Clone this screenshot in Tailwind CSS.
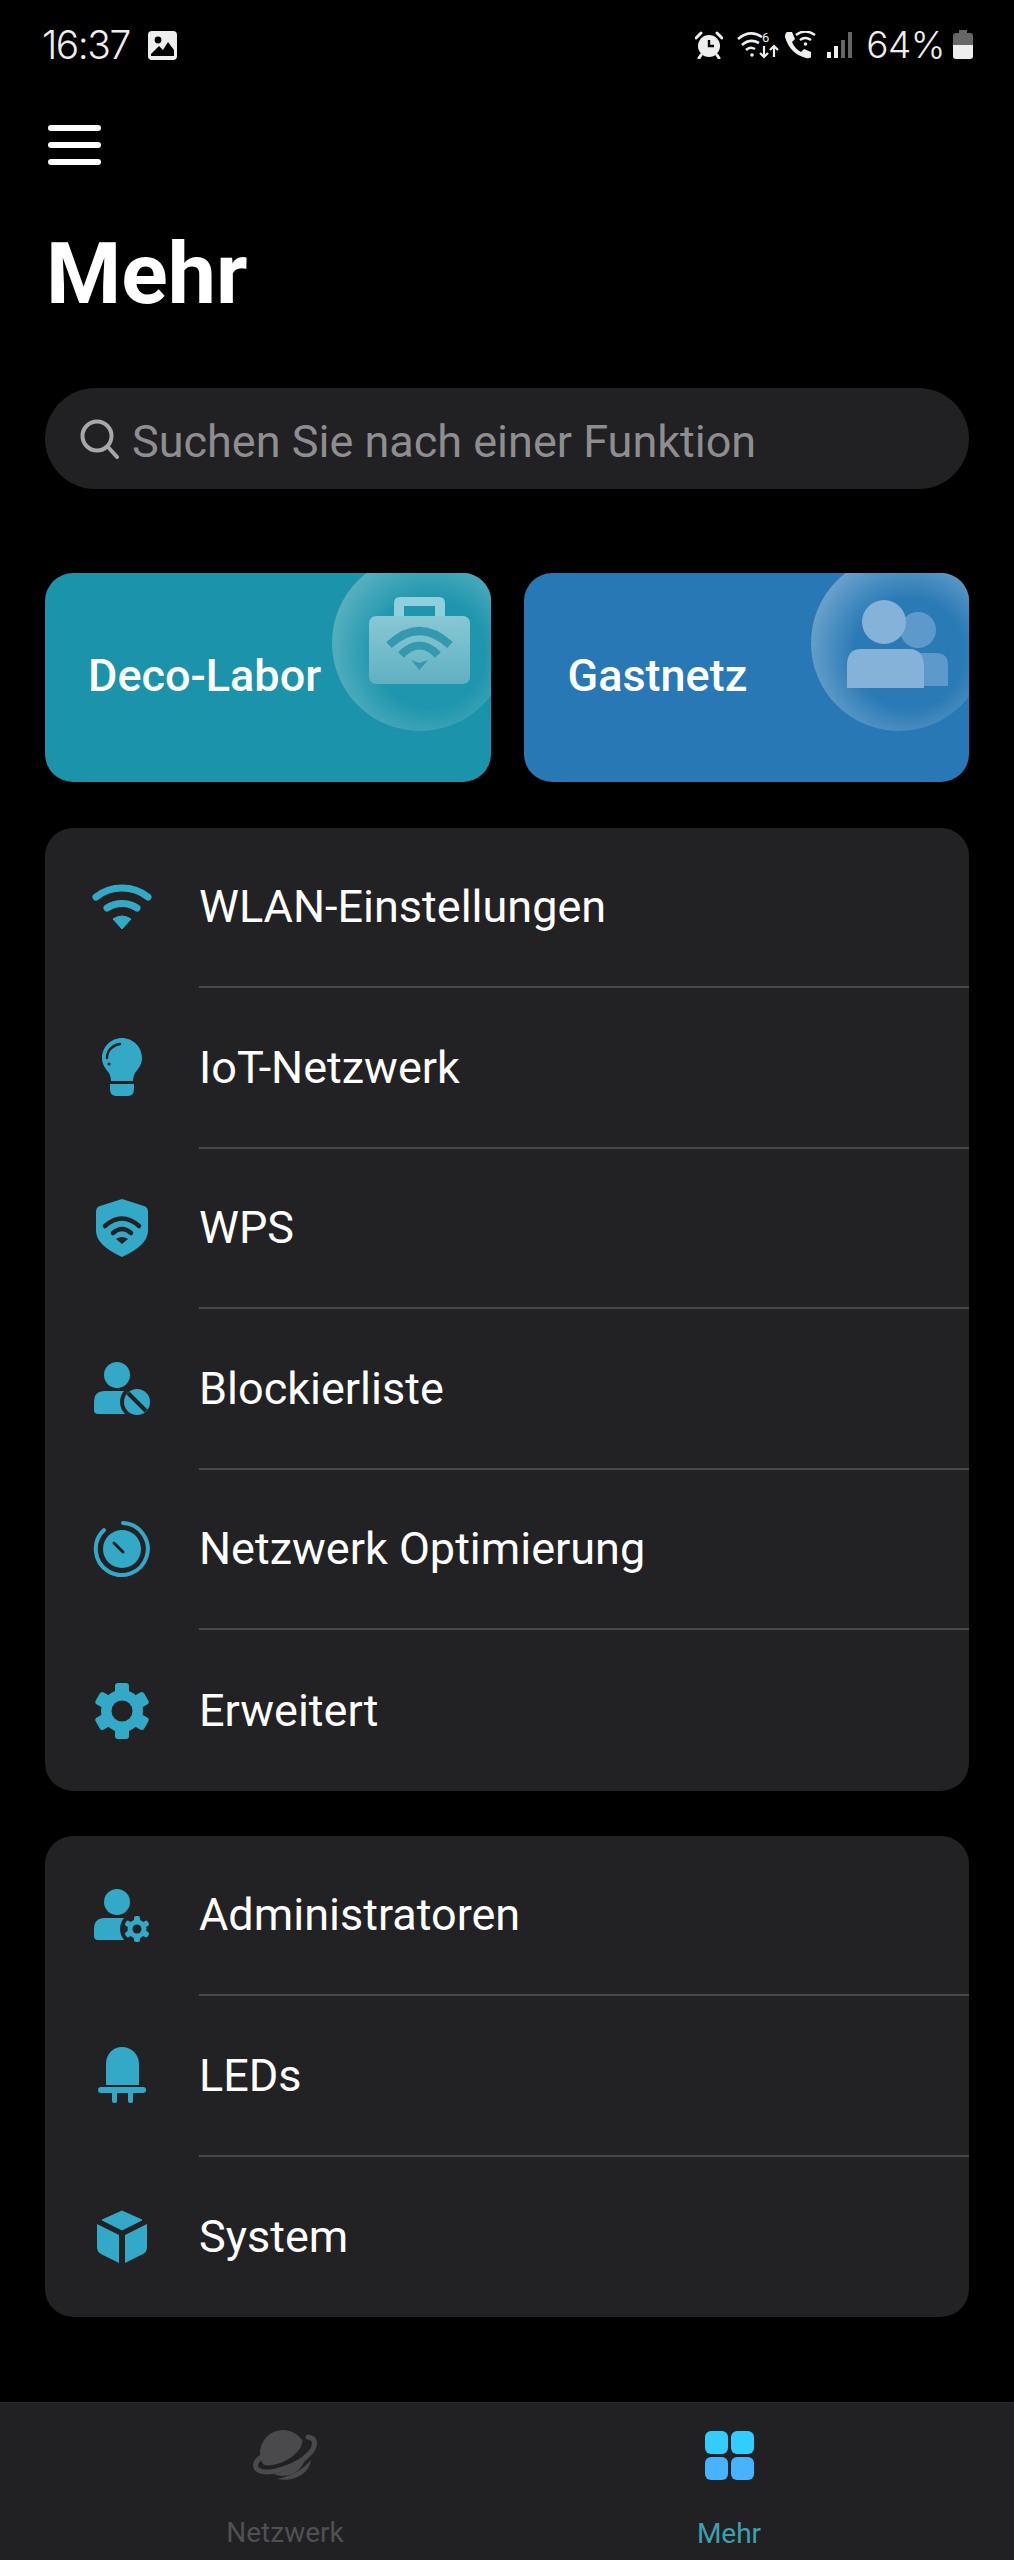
<!DOCTYPE html>
<html lang="de">
    <head>
        <meta charset="UTF-8" />
        <meta name="viewport" content="width=device-width, initial-scale=1.0" />
        <script src="https://cdn.jsdelivr.net/npm/@tailwindcss/browser@4"></script>
        <title>Mehr</title>
    </head>
    <body class="bg-black text-white font-['Roboto',sans-serif]">
        <div class="w-[1014px] h-[2560px] flex flex-col overflow-hidden">
            <!-- Status bar -->
            <div class="h-[60px] pt-[30px] pl-[42px] pr-[41px] flex justify-between items-center text-[#eeeeee]">
                <div class="flex items-center gap-[18px]">
                    <span class="text-[39px] leading-[40px] font-['Inter',sans-serif] tracking-[-1.5px] font-light">16:37</span>
                    <svg class="w-[29px] h-[29px]" viewBox="0 0 29 29">
                        <rect width="29" height="29" rx="4" fill="currentColor" />
                        <circle cx="10" cy="9" r="3.4" fill="#000" />
                        <path d="M3 23 L11 15 L15 19 L20 11 L26 19 V25 H3 Z" fill="#000" />
                    </svg>
                </div>
                <div class="flex items-center">
                    <svg class="w-[28px] h-[28px]" viewBox="0 0 28 28" fill="currentColor">
                        <circle cx="14" cy="15" r="11" />
                        <path d="M14 9 V15 H19" stroke="#000" stroke-width="2.4" fill="none" />
                        <path d="M1 7 L6 2 M27 7 L22 2 M6 24 L4 27 M22 24 L24 27" stroke="currentColor" stroke-width="3" stroke-linecap="round" />
                    </svg>
                    <svg class="w-[42px] h-[28px] ml-[14px]" viewBox="0 0 42 28" fill="none" stroke="currentColor">
                        <path d="M1 8 Q13 -2 25 6" stroke-width="2.6" />
                        <path d="M5 14 Q13 7 22 12" stroke-width="2.6" />
                        <path d="M9 19 Q13 15 18 18" stroke-width="2.6" />
                        <circle cx="15" cy="24" r="1.8" fill="currentColor" stroke="none" />
                        <path d="M27 15 V26 M23 22 L27 26 L31 22 M37 26 V15 M33 19 L37 15 L41 19" stroke-width="2.2" />
                        <text x="25" y="11" font-size="13" fill="currentColor" stroke="none" font-family="Roboto">6</text>
                    </svg>
                    <svg class="w-[32px] h-[28px] ml-[5px]" viewBox="0 0 32 28" fill="currentColor">
                        <path d="M3 1 L8 1 L11 8 L8 11 Q11 18 17 21 L20 18 L27 21 V26 Q26 28 22 27 Q6 23 1 6 Q1 2 3 1 Z" />
                        <g fill="none" stroke="currentColor" stroke-width="2.4">
                            <path d="M12 4 Q21 -3 31 4" />
                            <path d="M16 9 Q21 5 27 9" />
                        </g>
                        <circle cx="21.500" cy="13" r="1.8" />
                    </svg>
                    <svg class="w-[26px] h-[28px] ml-[10px]" viewBox="0 0 26 28">
                        <rect x="1" y="21" width="4" height="6" fill="#eeeeee" />
                        <rect x="8" y="15" width="4" height="12" fill="#eeeeee" />
                        <rect x="15" y="9" width="4" height="18" fill="#666666" />
                        <rect x="22" y="1" width="4" height="26" fill="#666666" />
                    </svg>
                    <span class="text-[37px] leading-[40px] font-['Inter',sans-serif] font-light tracking-[-0.5px] ml-[14px]">64%</span>
                    <svg class="w-[20px] h-[30px] ml-[8px]" viewBox="0 0 20 30">
                        <path d="M6 0 H14 V3 H17 Q20 3 20 6 V15 H0 V6 Q0 3 3 3 H6 Z" fill="#666666" />
                        <path d="M0 15 H20 V26 Q20 29 17 29 H3 Q0 29 0 26 Z" fill="#eeeeee" />
                    </svg>
                </div>
            </div>

            <!-- Menu button -->
            <div class="ml-[48px] mt-[65px] flex flex-col gap-[11px] w-[53px]">
                <div class="h-[6px] rounded-full bg-white"></div>
                <div class="h-[6px] rounded-full bg-white"></div>
                <div class="h-[6px] rounded-full bg-white"></div>
            </div>

            <h1 class="ml-[46px] mt-[59px] text-[86px] leading-[100px] font-bold">Mehr</h1>

            <!-- Search -->
            <div class="mx-[45px] mt-[64px] h-[101px] rounded-full bg-[#212123] flex items-center pl-[35px] gap-[12px] text-[#8e8e90]">
                <svg class="w-[40px] h-[40px]" viewBox="0 0 40 40" fill="none" stroke="#a8a8aa" stroke-width="4" stroke-linecap="round">
                    <circle cx="17" cy="17" r="14.500" />
                    <path d="M28 28 L37 38" />
                </svg>
                <span class="text-[45px] leading-none mt-[6px]">Suchen Sie nach einer Funktion</span>
            </div>

            <!-- Feature cards -->
            <div class="mx-[45px] mt-[84px] grid grid-cols-2 gap-[33px]">
                <div class="relative h-[209px] rounded-[28px] bg-[#1b93ab] overflow-hidden flex items-center pl-[43px] pb-[4px]">
                    <span class="text-[45px] font-medium">Deco-Labor</span>
                    <svg class="absolute left-[287px] top-[-18px] w-[176px] h-[176px]" viewBox="0 0 176 176">
                        <defs>
                            <radialGradient id="haloTeal" cx="0.56" cy="0.56" r="0.62">
                                <stop offset="50%" stop-color="#1f96ad" />
                                <stop offset="100%" stop-color="#5fb3c2" />
                            </radialGradient>
                            <linearGradient id="caseFill" x1="0" y1="0" x2="0" y2="1">
                                <stop offset="0%" stop-color="#88c8d4" />
                                <stop offset="100%" stop-color="#60b0c2" />
                            </linearGradient>
                        </defs>
                        <circle cx="88" cy="88" r="88" fill="url(#haloTeal)" />
                        <path d="M68 42 H107 Q113 42 113 48 V62 H103 V51 H72 V62 H62 V48 Q62 42 68 42 Z" fill="#8fd0dc" />
                        <rect x="37" y="61" width="101" height="68" rx="7" fill="url(#caseFill)" />
                        <g fill="none" stroke="#3499ae" stroke-width="8">
                            <path d="M57 90 Q87.500 62 118 90" />
                            <path d="M69 100 Q87.500 81 106 100" />
                        </g>
                        <path d="M79 105 L87.500 108 L96 105 L87.500 115 Z" fill="#3499ae" />
                    </svg>
                </div>
                <div class="relative h-[209px] rounded-[28px] bg-[#2778b4] overflow-hidden flex items-center pl-[44px] pb-[4px]">
                    <span class="text-[45px] font-medium">Gastnetz</span>
                    <svg class="absolute left-[287px] top-[-18px] w-[176px] h-[176px]" viewBox="0 0 176 176">
                        <defs>
                            <radialGradient id="haloBlue" cx="0.56" cy="0.56" r="0.62">
                                <stop offset="50%" stop-color="#2a7ab5" />
                                <stop offset="100%" stop-color="#72a6cf" />
                            </radialGradient>
                        </defs>
                        <circle cx="88" cy="88" r="88" fill="url(#haloBlue)" />
                        <circle cx="107" cy="75" r="18" fill="#5d9acb" />
                        <path d="M100 98 H125 Q137 98 137 110 V131 H100 Z" fill="#5d9acb" />
                        <circle cx="73" cy="67" r="22" fill="#85b2d9" />
                        <path d="M50 94 H98 Q113 94 113 112 V133 H36 V110 Q36 94 50 94 Z" fill="#85b2d9" />
                    </svg>
                </div>
            </div>

            <!-- Settings group -->
            <div class="mx-[45px] mt-[46px] h-[963px] rounded-[28px] bg-[#222224] flex flex-col">
                <div class="h-[158px] flex items-center">
                    <svg class="w-[60px] h-[60px] ml-[47px]" viewBox="0 0 60 60" fill="#33a9c7">
                        <g fill="none" stroke="#33a9c7" stroke-width="7" stroke-linecap="round">
                            <path d="M4 20 C19 8 41 8 56 20" />
                            <path d="M15 31 C24 25 36 25 45 31" />
                        </g>
                        <path d="M21 42 Q30 36 39 42 L30 52 Z" stroke="#33a9c7" stroke-width="1" />
                    </svg>
                    <span class="ml-[47px] text-[45px]">WLAN-Einstellungen</span>
                </div>
                <div class="h-[2px] ml-[154px] bg-[#48484a]"></div>
                <div class="h-[158.500px] flex items-center">
                    <svg class="w-[60px] h-[60px] ml-[47px]" viewBox="0 0 60 60" fill="#33a9c7">
                        <path d="M30 1 C41 1 50 10 50 21 C50 28 46 32 43 36 C42 38 41 41 41 44 H19 C19 41 18 38 17 36 C14 32 10 28 10 21 C10 10 19 1 30 1 Z" />
                        <path d="M18 47 H42 V52 Q42 59 36 59 H24 Q18 59 18 52 Z" />
                        <path d="M15 21 C15 13 21 8 28 7" fill="none" stroke="#222224" stroke-width="2.4" stroke-linecap="round" />
                        <circle cx="17" cy="27" r="1.600" fill="#222224" />
                    </svg>
                    <span class="ml-[47px] text-[45px]">IoT-Netzwerk</span>
                </div>
                <div class="h-[2px] ml-[154px] bg-[#48484a]"></div>
                <div class="h-[158.500px] flex items-center">
                    <svg class="w-[60px] h-[60px] ml-[47px]" viewBox="0 0 60 60" fill="#33a9c7">
                        <path d="M30 1 L52 8 Q56 9 56 14 V33 Q56 47 30 59 Q4 47 4 33 V14 Q4 9 8 8 Z" />
                        <g fill="none" stroke="#222224" stroke-width="4.500" stroke-linecap="round">
                            <path d="M13 28 Q30 13 47 28" />
                            <path d="M21 35 Q30 27 39 35" />
                        </g>
                        <path d="M24 41 Q30 37 36 41 L30 46 Z" fill="#222224" />
                    </svg>
                    <span class="ml-[47px] text-[45px]">WPS</span>
                </div>
                <div class="h-[2px] ml-[154px] bg-[#48484a]"></div>
                <div class="h-[158.500px] flex items-center">
                    <svg class="w-[60px] h-[60px] ml-[47px]" viewBox="0 0 60 60" fill="#33a9c7">
                        <circle cx="25" cy="17" r="13" />
                        <path d="M13 33 H37 Q47 33 47 45 V56 H6 Q2 56 2 52 V44 Q2 33 13 33 Z" />
                        <circle cx="45" cy="44" r="17" fill="#222224" />
                        <circle cx="45" cy="44" r="13" />
                        <path d="M36 35 L54 53" stroke="#222224" stroke-width="4" />
                    </svg>
                    <span class="ml-[47px] text-[45px]">Blockierliste</span>
                </div>
                <div class="h-[2px] ml-[154px] bg-[#48484a]"></div>
                <div class="h-[158.500px] flex items-center">
                    <svg class="w-[60px] h-[60px] ml-[47px]" viewBox="0 0 60 60" fill="#33a9c7">
                        <path d="M31 4 A26 26 0 1 1 12 11" fill="none" stroke="#33a9c7" stroke-width="4" stroke-linecap="round" />
                        <circle cx="30" cy="30" r="19" />
                        <path d="M22 24 L31 33" stroke="#222224" stroke-width="3" stroke-linecap="round" />
                    </svg>
                    <span class="ml-[47px] text-[45px]">Netzwerk Optimierung</span>
                </div>
                <div class="h-[2px] ml-[154px] bg-[#48484a]"></div>
                <div class="flex-1 flex items-center">
                    <svg class="w-[60px] h-[60px] ml-[47px]" viewBox="0 0 60 60" fill="#33a9c7">
                        <circle cx="30" cy="30" r="21" />
                        <rect x="23" y="2" width="14" height="14" rx="3" />
                        <rect x="23" y="44" width="14" height="14" rx="3" />
                        <rect x="23" y="2" width="14" height="14" rx="3" transform="rotate(60 30 30)" />
                        <rect x="23" y="2" width="14" height="14" rx="3" transform="rotate(120 30 30)" />
                        <rect x="23" y="2" width="14" height="14" rx="3" transform="rotate(240 30 30)" />
                        <rect x="23" y="2" width="14" height="14" rx="3" transform="rotate(300 30 30)" />
                        <circle cx="30" cy="30" r="10.500" fill="#222224" />
                    </svg>
                    <span class="ml-[47px] text-[45px]">Erweitert</span>
                </div>
            </div>

            <!-- System group -->
            <div class="mx-[45px] mt-[45px] h-[481px] rounded-[28px] bg-[#222224] flex flex-col">
                <div class="h-[158px] flex items-center">
                    <svg class="w-[60px] h-[60px] ml-[47px]" viewBox="0 0 60 60" fill="#33a9c7">
                        <circle cx="25" cy="17" r="13" />
                        <path d="M13 33 H37 Q47 33 47 45 V55 H6 Q2 55 2 51 V44 Q2 33 13 33 Z" />
                        <circle cx="45" cy="44" r="17" fill="#222224" />
                        <circle cx="45" cy="44" r="9.500" />
                        <rect x="42" y="31" width="6" height="26" rx="2" />
                        <rect x="42" y="31" width="6" height="26" rx="2" transform="rotate(60 45 44)" />
                        <rect x="42" y="31" width="6" height="26" rx="2" transform="rotate(120 45 44)" />
                        <circle cx="45" cy="44" r="4.500" fill="#222224" />
                    </svg>
                    <span class="ml-[47px] text-[45px]">Administratoren</span>
                </div>
                <div class="h-[2px] ml-[154px] bg-[#48484a]"></div>
                <div class="h-[158.500px] flex items-center">
                    <svg class="w-[60px] h-[60px] ml-[47px]" viewBox="0 0 60 60" fill="#33a9c7">
                        <path d="M14 40 V19 C14 9 21 2 30 2 C39 2 47 9 47 19 V40 Z" />
                        <rect x="6" y="42" width="48" height="6" rx="3" />
                        <rect x="20" y="46" width="5" height="12" rx="2" />
                        <rect x="36" y="46" width="5" height="12" rx="2" />
                    </svg>
                    <span class="ml-[47px] text-[45px]">LEDs</span>
                </div>
                <div class="h-[2px] ml-[154px] bg-[#48484a]"></div>
                <div class="flex-1 flex items-center">
                    <svg class="w-[60px] h-[60px] ml-[47px]" viewBox="0 0 60 60" fill="#33a9c7">
                        <path d="M30 4 L50 13 L30 23 L10 13 Z" stroke="#33a9c7" stroke-width="1" stroke-linejoin="round" />
                        <path d="M5 17 L27 28 V56 L9 47 Q5 45 5 40 Z" />
                        <path d="M55 17 L33 28 V56 L51 47 Q55 45 55 40 Z" />
                    </svg>
                    <span class="ml-[47px] text-[45px]">System</span>
                </div>
            </div>

            <!-- Tab bar -->
            <div class="mt-auto h-[158px] bg-[#212123] border-t border-[#2a2a2c] px-[63px] grid grid-cols-2">
                <div class="flex flex-col items-center pt-[27px] text-[#505052]">
                    <svg class="w-[64px] h-[52px]" viewBox="0 0 64 52">
                        <circle cx="30" cy="23" r="23" fill="#4a4a4c" />
                        <path d="M52 10 C56 15 50 24 42 30 C30 39 12 43 6 37" fill="none" stroke="#212123" stroke-width="9" />
                        <path d="M55 7 C64 8 63 17 56 24 C44 37 14 46 5 40 C1 37 2 32 7 28" fill="none" stroke="#4a4a4c" stroke-width="5" stroke-linecap="round" />
                        <path d="M24 49 C36 47 50 40 58 30 C57 41 44 53 24 49 Z" fill="#4a4a4c" />
                    </svg>
                    <span class="mt-[33px] text-[28px] leading-[36px]">Netzwerk</span>
                </div>
                <div class="flex flex-col items-center pt-[28px] text-[#3f9fb0]">
                    <div class="w-[49px] h-[49px] grid grid-cols-2 gap-[3px]">
                        <div class="rounded-[6px] bg-[#33ccff]"></div>
                        <div class="rounded-[6px] bg-[#33ccff]"></div>
                        <div class="rounded-[6px] bg-[#48b2ff]"></div>
                        <div class="rounded-[6px] bg-[#48b2ff]"></div>
                    </div>
                    <span class="mt-[36px] text-[28px] leading-[36px]">Mehr</span>
                </div>
            </div>
        </div>
    </body>
</html>
